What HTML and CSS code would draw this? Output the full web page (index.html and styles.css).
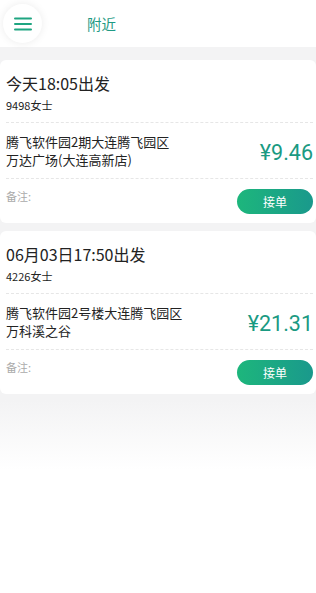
FILE: index.html
```html
<!DOCTYPE html>
<html lang="zh">
<head>
<meta charset="utf-8">
<link rel="stylesheet" href="styles.css">
</head>
<body>
<div class="page">
  <header class="header">
    <div class="menu-btn">
      <svg width="18" height="14" viewBox="0 0 18 14"><path d="M1 1.5H17M1 7H17M1 12.5H17" stroke="#1fa581" stroke-width="2" stroke-linecap="round"/></svg>
    </div>
    <div class="title">附近</div>
  </header>
  <div class="list">
    <div class="card">
      <div class="time">今天18:05出发</div>
      <div class="name">9498女士</div>
      <div class="route">
        <div class="addr">腾飞软件园2期大连腾飞园区<br>万达广场(大连高新店)</div>
        <div class="price">¥9.46</div>
      </div>
      <div class="foot">
        <div class="note">备注:</div>
        <div class="btn">接单</div>
      </div>
    </div>
    <div class="card">
      <div class="time">06月03日17:50出发</div>
      <div class="name">4226女士</div>
      <div class="route">
        <div class="addr">腾飞软件园2号楼大连腾飞园区<br>万科溪之谷</div>
        <div class="price">¥21.31</div>
      </div>
      <div class="foot">
        <div class="note">备注:</div>
        <div class="btn">接单</div>
      </div>
    </div>
  </div>
</div>
</body>
</html>
```

FILE: styles.css
```css
* { box-sizing: border-box; }
html, body { margin: 0; padding: 0; }
body {
  font-family: "Noto Sans CJK SC", "Noto Sans", sans-serif;
  background: #fff;
  width: 316px;
  height: 593px;
  overflow: hidden;
  color: #222;
}
.page {
  background: linear-gradient(to bottom, #f3f3f4 0, #f3f3f4 400px, #fff 470px);
  min-height: 593px;
}
.header {
  height: 47px;
  background: #fff;
  display: flex;
  align-items: center;
  padding-left: 3px;
}
.menu-btn {
  width: 39px;
  height: 39px;
  border-radius: 50%;
  background: #fff;
  box-shadow: 0 0 8px rgba(0,0,0,0.08);
  display: flex;
  align-items: center;
  justify-content: center;
}
.title {
  margin-left: 45px;
  font-size: 14.5px;
  color: #1f9a84;
}
.list {
  padding-top: 13px;
  display: flex;
  flex-direction: column;
  gap: 8px;
}
.card {
  background: #fff;
  border-radius: 6px;
  padding: 11px 3px 9px 6px;
}
.time {
  font-size: 16px;
  line-height: 24px;
  color: #222;
}
.name {
  font-size: 11px;
  line-height: 16px;
  margin-top: 2px;
  color: #222;
}
.route {
  margin-top: 9px;
  border-top: 1px dashed #e6e6e6;
  border-bottom: 1px dashed #e6e6e6;
  padding: 10px 0 9px;
  display: flex;
  align-items: center;
  justify-content: space-between;
}
.addr {
  font-size: 13px;
  line-height: 18px;
  color: #222;
}
.price {
  font-size: 21.5px;
  color: #1a9a82;
  font-family: Roboto, "Noto Sans", sans-serif;
  margin-top: 2px;
}
.foot {
  display: flex;
  justify-content: space-between;
  align-items: flex-start;
  padding-top: 9px;
}
.note {
  font-size: 11px;
  color: #aaa;
  line-height: 16px;
}
.btn {
  width: 76px;
  height: 25px;
  border-radius: 13px;
  background: linear-gradient(to right, #1db67c, #1a998c);
  color: #fff;
  font-size: 12px;
  display: flex;
  align-items: center;
  justify-content: center;
  margin-top: 1px;
}
```
